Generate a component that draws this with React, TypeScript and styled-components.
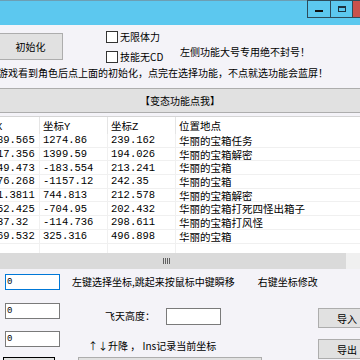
import React from "react";
import styled, { createGlobalStyle } from "styled-components";

const Global = createGlobalStyle`
  html, body { margin: 0; padding: 0; background: #f4f3f8; }
  body { font-family: "Noto Sans CJK SC", "Noto Sans", sans-serif; }
`;

const CJK = `"Noto Sans CJK SC", "Noto Sans", sans-serif`;
const MONO = `"Liberation Mono", "Noto Sans CJK SC", monospace`;

const Window = styled.div`
  width: 360px;
  height: 360px;
  overflow: hidden;
  background: #f4f3f8;
  color: #000;
  font-family: ${CJK};
  font-size: 10px;
  display: flex;
  flex-direction: column;
`;

const TitleBar = styled.div`
  height: 25px;
  flex: none;
  box-sizing: border-box;
  background: #5cc8ef;
  border-top: 1px solid #6c9fb4;
  display: flex;
  align-items: flex-start;
  padding-left: 307px;
`;

const WinButton = styled.div<{ $w: number; $close?: boolean }>`
  width: ${(p) => p.$w}px;
  height: 18px;
  flex: none;
  box-sizing: border-box;
  margin-top: -1px;
  border: 1px solid #2d4b5a;
  background: ${(p) => (p.$close ? "#c9524c" : "#5cc8ef")};
  display: flex;
  align-items: center;
  justify-content: center;
  & + & { border-left: none; }
`;

const MinGlyph = styled.div`
  width: 8px;
  height: 2px;
  background: #111;
  margin-top: 3px;
`;

const MaxGlyph = styled.div`
  width: 8px;
  height: 6px;
  box-sizing: border-box;
  border: 1px solid #1d3340;
  border-top-width: 2px;
`;

const TopRow = styled.div`
  height: 40px;
  flex: none;
  display: flex;
  align-items: flex-start;
`;

const GrayButton = styled.button`
  box-sizing: border-box;
  background: #e1e1e1;
  border: 1px solid #adadad;
  font-family: ${CJK};
  font-size: 10px;
  color: #000;
  padding: 0;
  flex: none;
`;

const InitButton = styled(GrayButton)`
  margin: 8px 0 0 -2px;
  width: 65px;
  height: 27px;
`;

const Checks = styled.div`
  margin: 6px 0 0 43px;
  width: 74px;
  flex: none;
  display: flex;
  flex-direction: column;
`;

const CheckRow = styled.div`
  height: 20px;
  display: flex;
  align-items: flex-start;
`;

const Box = styled.div`
  width: 12px;
  height: 12px;
  box-sizing: border-box;
  border: 1px solid #333;
  background: #fff;
  flex: none;
`;

const CheckLabel = styled.span`
  margin-left: 2px;
  line-height: 12px;
  white-space: nowrap;
`;

const Notice = styled.div`
  margin-top: 20px;
  line-height: 14px;
  white-space: nowrap;
`;

const Message = styled.div`
  height: 16px;
  line-height: 16px;
  flex: none;
  margin-left: -2px;
  white-space: nowrap;
`;

const FuncBar = styled(GrayButton)`
  margin: 7px -4px 0 -4px;
  height: 25px;
  width: 368px;
  font-size: 10px;
`;

const ListBox = styled.div`
  margin-top: 3px;
  height: 152px;
  flex: none;
  display: flex;
  flex-direction: column;
  background: #fff;
  border-top: 1px solid #d5d5d5;
`;

const GridRow = styled.div<{ $h: number; $line?: boolean }>`
  display: grid;
  grid-template-columns: 65px 68px 68px 260px;
  margin-left: -25px;
  height: ${(p) => p.$h}px;
  flex: none;
  box-sizing: border-box;
  border-bottom: ${(p) => (p.$line ? "1px solid #f0f0f0" : "none")};
  font-family: ${MONO};
  font-size: 10.5px;
`;

const Cell = styled.div<{ $head?: boolean; $flush?: boolean }>`
  box-sizing: border-box;
  padding-left: ${(p) => (p.$flush ? 0 : 3)}px;
  border-right: 1px solid ${(p) => (p.$head ? "#e5e5e5" : "#f0f0f0")};
  white-space: nowrap;
  overflow: hidden;
  display: flex;
  align-items: center;
`;

const Filler = styled(GridRow)`
  flex: 1;
  height: auto;
`;

const ScrollBar = styled.div`
  height: 16px;
  flex: none;
  background: #f0f0f0;
  display: flex;
`;

const Thumb = styled.div`
  margin-left: -14px;
  width: 360px;
  height: 16px;
  flex: none;
  background: #dadada;
  display: flex;
  align-items: center;
  justify-content: center;
  gap: 1px;
`;

const Grip = styled.div`
  width: 1px;
  height: 6px;
  background: #606060;
`;

const Bottom = styled.div`
  padding-top: 5px;
  display: flex;
  flex-direction: column;
`;

const FormRow = styled.div<{ $h: number }>`
  height: ${(p) => p.$h}px;
  flex: none;
  display: flex;
  align-items: flex-start;
  width: 360px;
`;

const TextBox = styled.div<{ $focus?: boolean; $x?: number; $y?: number; $h?: number }>`
  width: 55px;
  height: ${(p) => p.$h ?? 16}px;
  flex: none;
  box-sizing: border-box;
  margin-left: ${(p) => p.$x ?? 5}px;
  margin-top: ${(p) => p.$y ?? 0}px;
  background: #fff;
  border: 1px solid ${(p) => (p.$focus ? "#0078d7" : "#7a7a7a")};
  font-family: ${MONO};
  font-size: 9px;
  line-height: 14px;
  padding-left: 1px;
`;

const Label = styled.span<{ $x: number; $y?: number; $lh?: number }>`
  margin-left: ${(p) => p.$x}px;
  margin-top: ${(p) => p.$y ?? 0}px;
  line-height: ${(p) => p.$lh ?? 16}px;
  white-space: nowrap;
  flex: none;
`;

const SideButton = styled(GrayButton)<{ $y: number }>`
  margin: ${(p) => p.$y}px -16px 0 auto;
  width: 58px;
  height: 20px;
`;

const FocusButton = styled(GrayButton)`
  margin-left: 3px;
  width: 52px;
  height: 20px;
  border: 1px solid #000;
  line-height: 14px;
`;

const Bar = styled.div`
  margin-left: 23px;
  width: 184px;
  height: 20px;
  box-sizing: border-box;
  background: #e1e1e1;
  border: 1px solid #adadad;
`;

const rows = [
  ["-1289.565", "1274.86", "239.162", "华丽的宝箱任务"],
  ["-2117.356", "1399.59", "194.026", "华丽的宝箱解密"],
  ["-1349.473", "-183.554", "213.241", "华丽的宝箱"],
  ["-1276.268", "-1157.12", "242.35", "华丽的宝箱"],
  ["-211.3811", "744.813", "212.578", "华丽的宝箱解密"],
  ["-1452.425", "-704.95", "202.432", "华丽的宝箱打死四怪出箱子"],
  ["-1237.32", "-114.736", "298.611", "华丽的宝箱打风怪"],
  ["-1269.532", "325.316", "496.898", "华丽的宝箱"],
];

export default function App() {
  return (
    <Window>
      <Global />
      <TitleBar>
        <WinButton $w={24}>
          <MinGlyph />
        </WinButton>
        <WinButton $w={22}>
          <MaxGlyph />
        </WinButton>
        <WinButton $w={22} $close />
      </TitleBar>

      <TopRow>
        <InitButton>初始化</InitButton>
        <Checks>
          <CheckRow>
            <Box />
            <CheckLabel>无限体力</CheckLabel>
          </CheckRow>
          <CheckRow>
            <Box />
            <CheckLabel>技能无CD</CheckLabel>
          </CheckRow>
        </Checks>
        <Notice>左侧功能大号专用绝不封号！</Notice>
      </TopRow>

      <Message>游戏看到角色后点上面的初始化，点完在选择功能，不点就选功能会蓝屏！</Message>

      <FuncBar>【变态功能点我】</FuncBar>

      <ListBox>
        <GridRow $h={17}>
          <Cell $head $flush>坐标X</Cell>
          <Cell $head>坐标Y</Cell>
          <Cell $head>坐标Z</Cell>
          <Cell $head>位置地点</Cell>
        </GridRow>
        {rows.map((r, i) => (
          <GridRow key={i} $h={13.7} $line>
            {r.map((c, j) => (
              <Cell key={j}>{c}</Cell>
            ))}
          </GridRow>
        ))}
        <Filler $h={0}>
          <Cell />
          <Cell />
          <Cell />
          <Cell />
        </Filler>
        <ScrollBar>
          <Thumb>
            <Grip />
            <Grip />
            <Grip />
            <Grip />
          </Thumb>
        </ScrollBar>
      </ListBox>

      <Bottom>
        <FormRow $h={29}>
          <TextBox $focus>0</TextBox>
          <Label $x={12}>左键选择坐标,跳起来按鼠标中键瞬移</Label>
          <Label $x={23}>右键坐标修改</Label>
        </FormRow>
        <FormRow $h={28}>
          <TextBox>0</TextBox>
          <Label $x={45} $y={6} $lh={14}>
            飞天高度：
          </Label>
          <TextBox $x={11} $y={5} $h={17} />
          <SideButton $y={5}>导入</SideButton>
        </FormRow>
        <FormRow $h={26}>
          <TextBox>0</TextBox>
          <Label $x={28} $y={8} $lh={14}>
            ↑↓升降 ， Ins记录当前坐标
          </Label>
          <SideButton $y={8}>导出</SideButton>
        </FormRow>
        <FormRow $h={20}>
          <FocusButton>人物读坐标</FocusButton>
          <Bar />
        </FormRow>
      </Bottom>
    </Window>
  );
}
